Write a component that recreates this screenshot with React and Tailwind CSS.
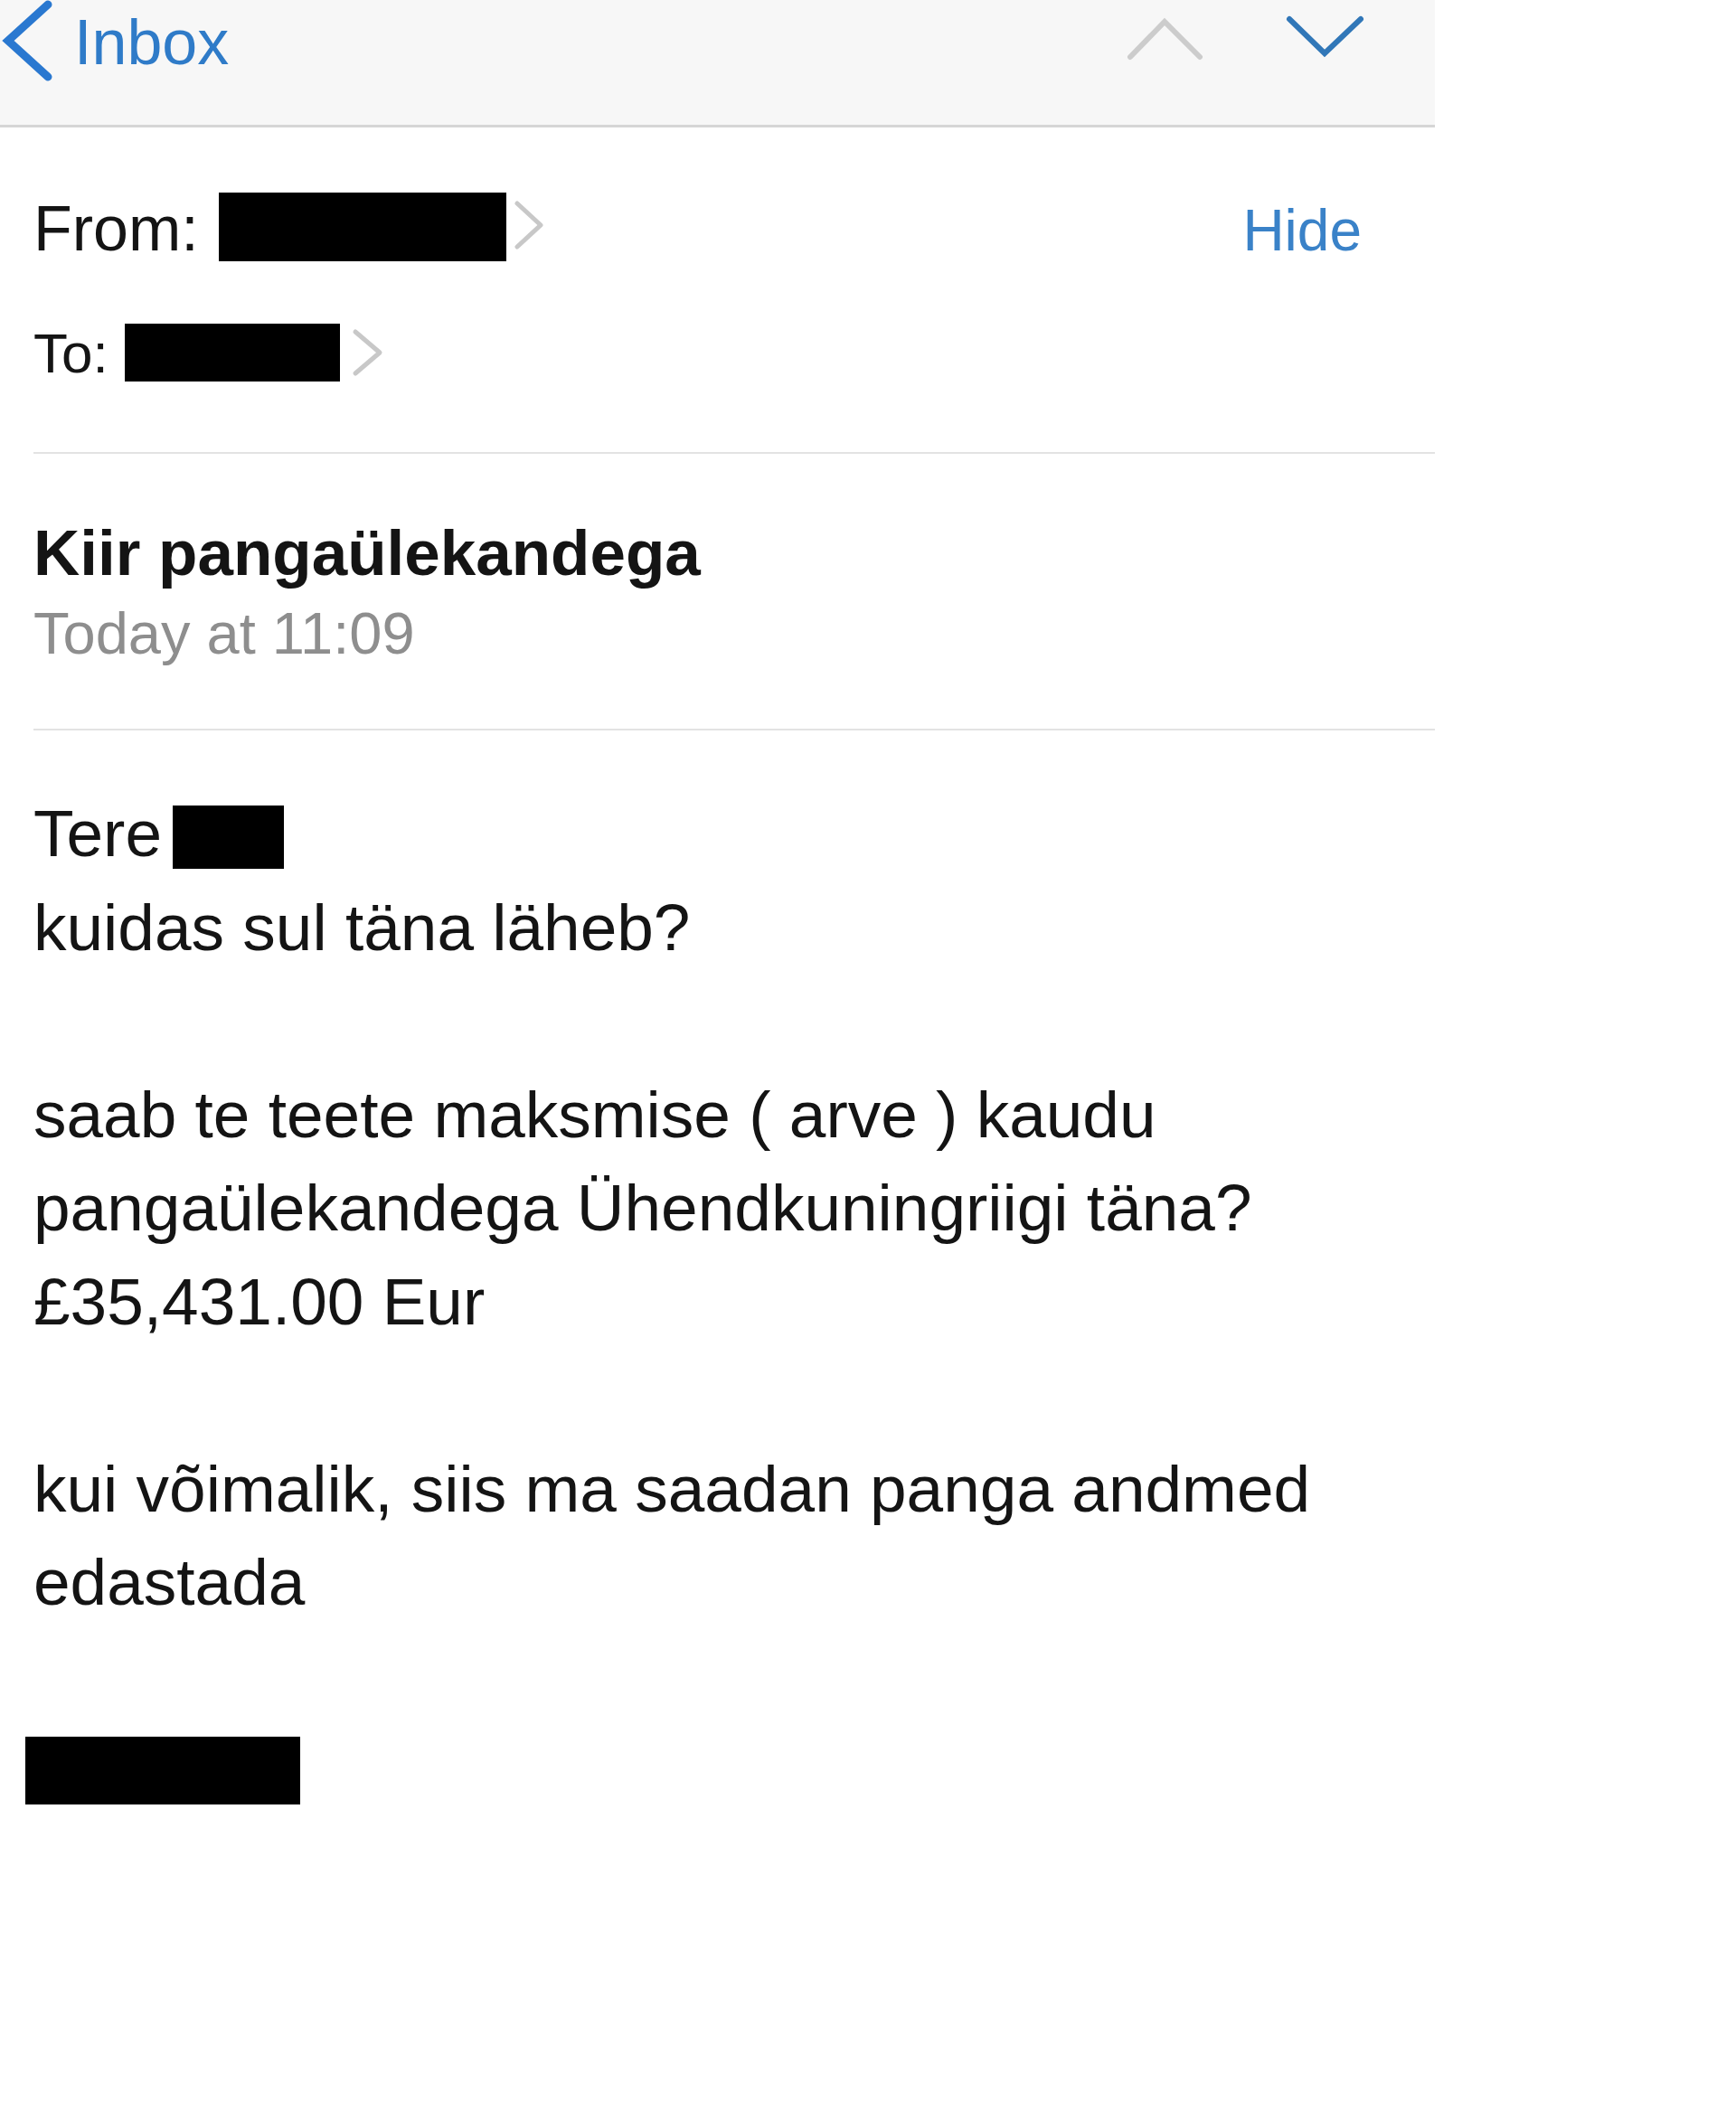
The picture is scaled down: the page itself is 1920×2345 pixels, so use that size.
export default function App() {
  const font = { fontFamily: '"Liberation Sans", Arial, sans-serif' };
  return (
    <div className="min-h-[2345px] w-full bg-white text-[#141414]" style={font}>
      <div className="w-[1587px]">
        {/* Header */}
        <div className="flex h-[141px] items-start justify-between border-b-[3px] border-[#d6d6d6] bg-[#f7f7f7]">
          <div className="flex items-start">
            <svg width="60" height="90" viewBox="0 0 60 90" className="shrink-0">
              <polyline points="53,5 9,45 53,85" fill="none" stroke="#2a78d0" strokeWidth="9" strokeLinecap="round" strokeLinejoin="miter" />
            </svg>
            <span className="ml-[22px] mt-[12px] text-[70px] leading-[70px] text-[#2f7bc8]">Inbox</span>
          </div>
          <div className="flex items-start pr-[77px]">
            <svg width="90" height="50" viewBox="0 0 90 50" className="mt-[18px] shrink-0">
              <polyline points="5,45 43,6 82,45" fill="none" stroke="#cccccc" strokeWidth="6" strokeLinecap="round" strokeLinejoin="miter" />
            </svg>
            <svg width="90" height="50" viewBox="0 0 90 50" className="ml-[85px] mt-[16px] shrink-0">
              <polyline points="6,5 45,43 85,5" fill="none" stroke="#3177b8" strokeWidth="6" strokeLinecap="round" strokeLinejoin="miter" />
            </svg>
          </div>
        </div>

        {/* From / To */}
        <div className="pl-[37px]">
          <div className="mt-[72px] flex items-start justify-between pr-[81px]">
            <div className="flex items-start">
              <span className="mt-[5px] text-[70px] leading-[70px]">From:</span>
              <div className="ml-[22px] h-[76px] w-[318px] bg-black" />
              <svg width="36" height="56" viewBox="0 0 36 56" className="ml-[8px] mt-[8px] shrink-0">
                <polyline points="4,4 30,28 4,52" fill="none" stroke="#c8c8c8" strokeWidth="5" strokeLinecap="round" strokeLinejoin="round" />
              </svg>
            </div>
            <span className="mt-[10px] text-[64px] leading-[64px] text-[#3a82c8]">Hide</span>
          </div>

          <div className="mt-[69px] flex items-start">
            <span className="mt-[2px] text-[62px] leading-[62px]">To:</span>
            <div className="ml-[18px] h-[64px] w-[238px] bg-black" />
            <svg width="36" height="54" viewBox="0 0 36 54" className="ml-[13px] mt-[5px] shrink-0">
              <polyline points="4,4 31,27 4,50" fill="none" stroke="#c8c8c8" strokeWidth="5" strokeLinecap="round" strokeLinejoin="round" />
            </svg>
          </div>

          <div className="mt-[78px] h-[2px] bg-[#e3e3e3]" />

          {/* Subject */}
          <div className="mt-[74px] text-[71px] font-bold leading-[72px]">Kiir pangaülekandega</div>
          <div className="mt-[20px] text-[65px] leading-[65px] text-[#8e8e8e]">Today at 11:09</div>

          <div className="mt-[73px] h-[2px] bg-[#e3e3e3]" />

          {/* Body */}
          <div className="mt-[62px] text-[73px] leading-[103.5px]">
            <div className="flex items-start">
              <span>Tere</span>
              <div className="ml-[12px] mt-[21px] h-[70px] w-[123px] bg-black" />
            </div>
            <div>kuidas sul täna läheb?</div>
            <div className="h-[103.5px]" />
            <div>saab te teete maksmise ( arve ) kaudu</div>
            <div>pangaülekandega Ühendkuningriigi täna?</div>
            <div>£35,431.00 Eur</div>
            <div className="h-[103.5px]" />
            <div>kui võimalik, siis ma saadan panga andmed</div>
            <div>edastada</div>
            <div className="h-[103.5px]" />
            <div className="-ml-[9px] mt-[16px] h-[75px] w-[304px] bg-black" />
          </div>
        </div>
      </div>
    </div>
  );
}
